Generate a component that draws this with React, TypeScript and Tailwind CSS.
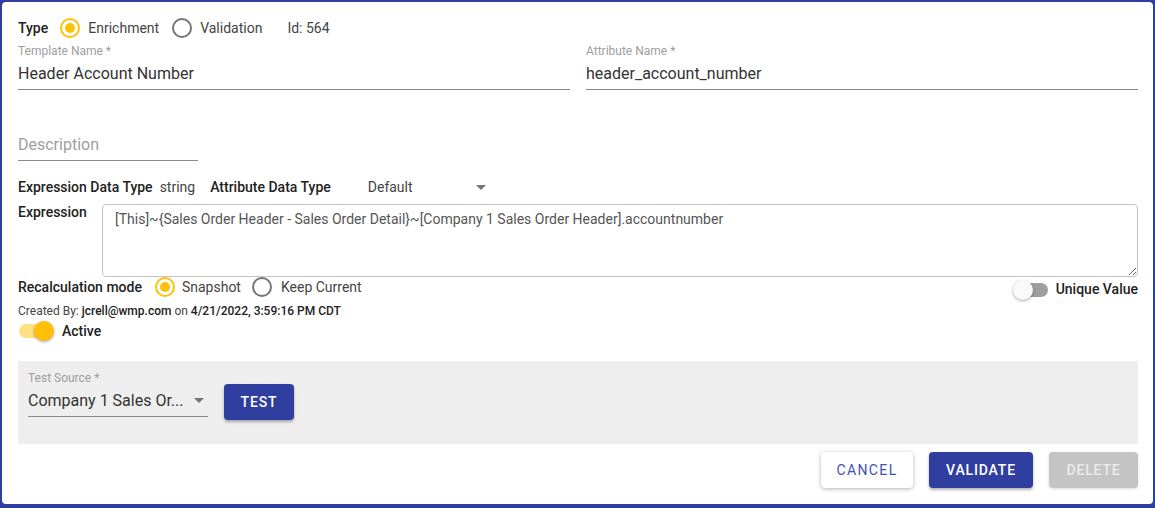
import React from 'react';

function Radio({ checked }: { checked?: boolean }) {
  return (
    <span
      className={
        'flex h-[20px] w-[20px] shrink-0 items-center justify-center rounded-full border-2 ' +
        (checked ? 'border-[#ffc107]' : 'border-[#757575]')
      }
    >
      {checked && <span className="h-[10px] w-[10px] rounded-full bg-[#ffc107]" />}
    </span>
  );
}

function Switch({ on }: { on?: boolean }) {
  return (
    <span className="relative flex h-[20px] w-[36px] shrink-0 items-center">
      <span
        className={
          'ml-[1px] h-[14px] w-[34px] rounded-full ' + (on ? 'bg-[#ffe083]' : 'bg-[#9e9e9e]')
        }
      />
      <span
        className={
          'absolute top-0 h-[20px] w-[20px] rounded-full shadow-[0_1px_3px_rgba(0,0,0,0.35)] ' +
          (on ? 'right-0 bg-[#ffc107]' : 'left-0 bg-[#fafafa]')
        }
      />
    </span>
  );
}

function Caret() {
  return (
    <svg width="10" height="5" viewBox="0 0 10 5" className="shrink-0">
      <path d="M0 0 L10 0 L5 5 Z" fill="#757575" />
    </svg>
  );
}

function Field({ label, value, className }: { label: string; value: string; className?: string }) {
  return (
    <div className={'flex flex-col ' + (className ?? '')}>
      <div className="h-[14px] text-[12px] leading-[14px] text-[#9e9e9e]">{label}</div>
      <div className="mt-[6px] border-b border-[#8a8a8a] pb-[6px] text-[16px] leading-[19px] text-[#333]">
        {value}
      </div>
    </div>
  );
}

export default function App() {
  return (
    <div
      className="h-[508px] w-[1155px] bg-[#303f9f] pt-[2px] pr-[2px] pb-[4px] pl-[2px] text-[14px]"
      style={{ fontFamily: 'Roboto, "Liberation Sans", sans-serif' }}
    >
      <div className="flex h-full flex-col rounded-[4px] bg-white pl-[16px] pr-[15px] pt-[16px]">
        {/* type row */}
        <div className="flex h-[20px] items-center text-[#444]">
          <span className="font-medium text-[#222]">Type</span>
          <span className="ml-[12px]">
            <Radio checked />
          </span>
          <span className="ml-[8px]">Enrichment</span>
          <span className="ml-[13px]">
            <Radio />
          </span>
          <span className="ml-[8px]">Validation</span>
          <span className="ml-[25px]">Id: 564</span>
        </div>

        <div className="mt-[6px] flex gap-[16px]">
          <Field className="flex-1" label="Template Name *" value="Header Account Number" />
          <Field className="flex-1" label="Attribute Name *" value="header_account_number" />
        </div>

        <div className="mt-[45px] w-[180px] border-b border-[#8a8a8a] pb-[6px] text-[16px] leading-[19px] text-[#9e9e9e]">
          Description
        </div>

        <div className="mt-[16px] flex h-[20px] items-center">
          <span className="font-medium text-[#222]">Expression Data Type</span>
          <span className="ml-[7px] text-[#444]">string</span>
          <span className="ml-[15px] font-medium text-[#222]">Attribute Data Type</span>
          <span className="ml-[37px] flex w-[118px] items-center justify-between text-[#444]">
            Default
            <Caret />
          </span>
        </div>

        <div className="mt-[7px] flex">
          <span className="mt-[-2px] w-[84px] font-medium text-[#222]">Expression</span>
          <textarea
            readOnly
            className="h-[73px] flex-1 rounded-[4px] border border-[#c4c4c4] px-[12px] py-[5px] text-[14px] leading-[18px] text-[#555] outline-none"
            defaultValue="[This]~{Sales Order Header - Sales Order Detail}~[Company 1 Sales Order Header].accountnumber"
          />
        </div>

        <div className="mt-[0px] flex h-[20px] items-center">
          <span className="font-medium text-[#222]">Recalculation mode</span>
          <span className="ml-[13px]">
            <Radio checked />
          </span>
          <span className="ml-[7px] text-[#444]">Snapshot</span>
          <span className="ml-[11px]">
            <Radio />
          </span>
          <span className="ml-[9px] text-[#444]">Keep Current</span>
          <span className="ml-auto mt-[5px] flex items-center">
            <Switch />
            <span className="ml-[7px] font-medium text-[#222]">Unique Value</span>
          </span>
        </div>

        <div className="mt-[7px] h-[14px] text-[12px] leading-[14px] text-[#444]">
          Created By: <span className="font-medium text-[#222]">jcrell@wmp.com</span> on{' '}
          <span className="font-medium text-[#222]">4/21/2022, 3:59:16 PM CDT</span>
        </div>

        <div className="mt-[3px] flex h-[20px] items-center">
          <Switch on />
          <span className="ml-[8px] font-medium text-[#222]">Active</span>
        </div>

        <div className="mt-[20px] flex h-[83px] items-start bg-[#eeeeee] px-[10px] pt-[10px]">
          <div className="flex w-[180px] flex-col">
            <div className="h-[14px] text-[12px] leading-[14px] text-[#9e9e9e]">Test Source *</div>
            <div className="mt-[6px] flex items-center justify-between border-b border-[#8a8a8a] pb-[6px] pr-[4px] text-[16px] leading-[19px] text-[#333]">
              <span>Company 1 Sales Or...</span>
              <Caret />
            </div>
          </div>
          <button className="ml-[16px] mt-[13px] h-[36px] w-[70px] rounded-[4px] bg-[#303f9f] text-[14px] font-medium tracking-[0.06em] text-white shadow-[0_2px_3px_rgba(0,0,0,0.3)]">
            TEST
          </button>
        </div>

        <div className="mt-[8px] flex justify-end gap-[16px]">
          <button className="h-[36px] w-[92px] rounded-[4px] bg-white text-[14px] tracking-[0.1em] text-[#3f51b5] shadow-[0_1px_4px_rgba(0,0,0,0.3)]">
            CANCEL
          </button>
          <button className="h-[36px] w-[104px] rounded-[4px] bg-[#303f9f] text-[14px] font-medium tracking-[0.06em] text-white shadow-[0_2px_3px_rgba(0,0,0,0.3)]">
            VALIDATE
          </button>
          <button className="h-[36px] w-[89px] rounded-[4px] bg-[#c4c4c4] text-[14px] font-medium tracking-[0.06em] text-[#eaeaea] shadow-[0_1px_3px_rgba(0,0,0,0.15)]">
            DELETE
          </button>
        </div>
      </div>
    </div>
  );
}
